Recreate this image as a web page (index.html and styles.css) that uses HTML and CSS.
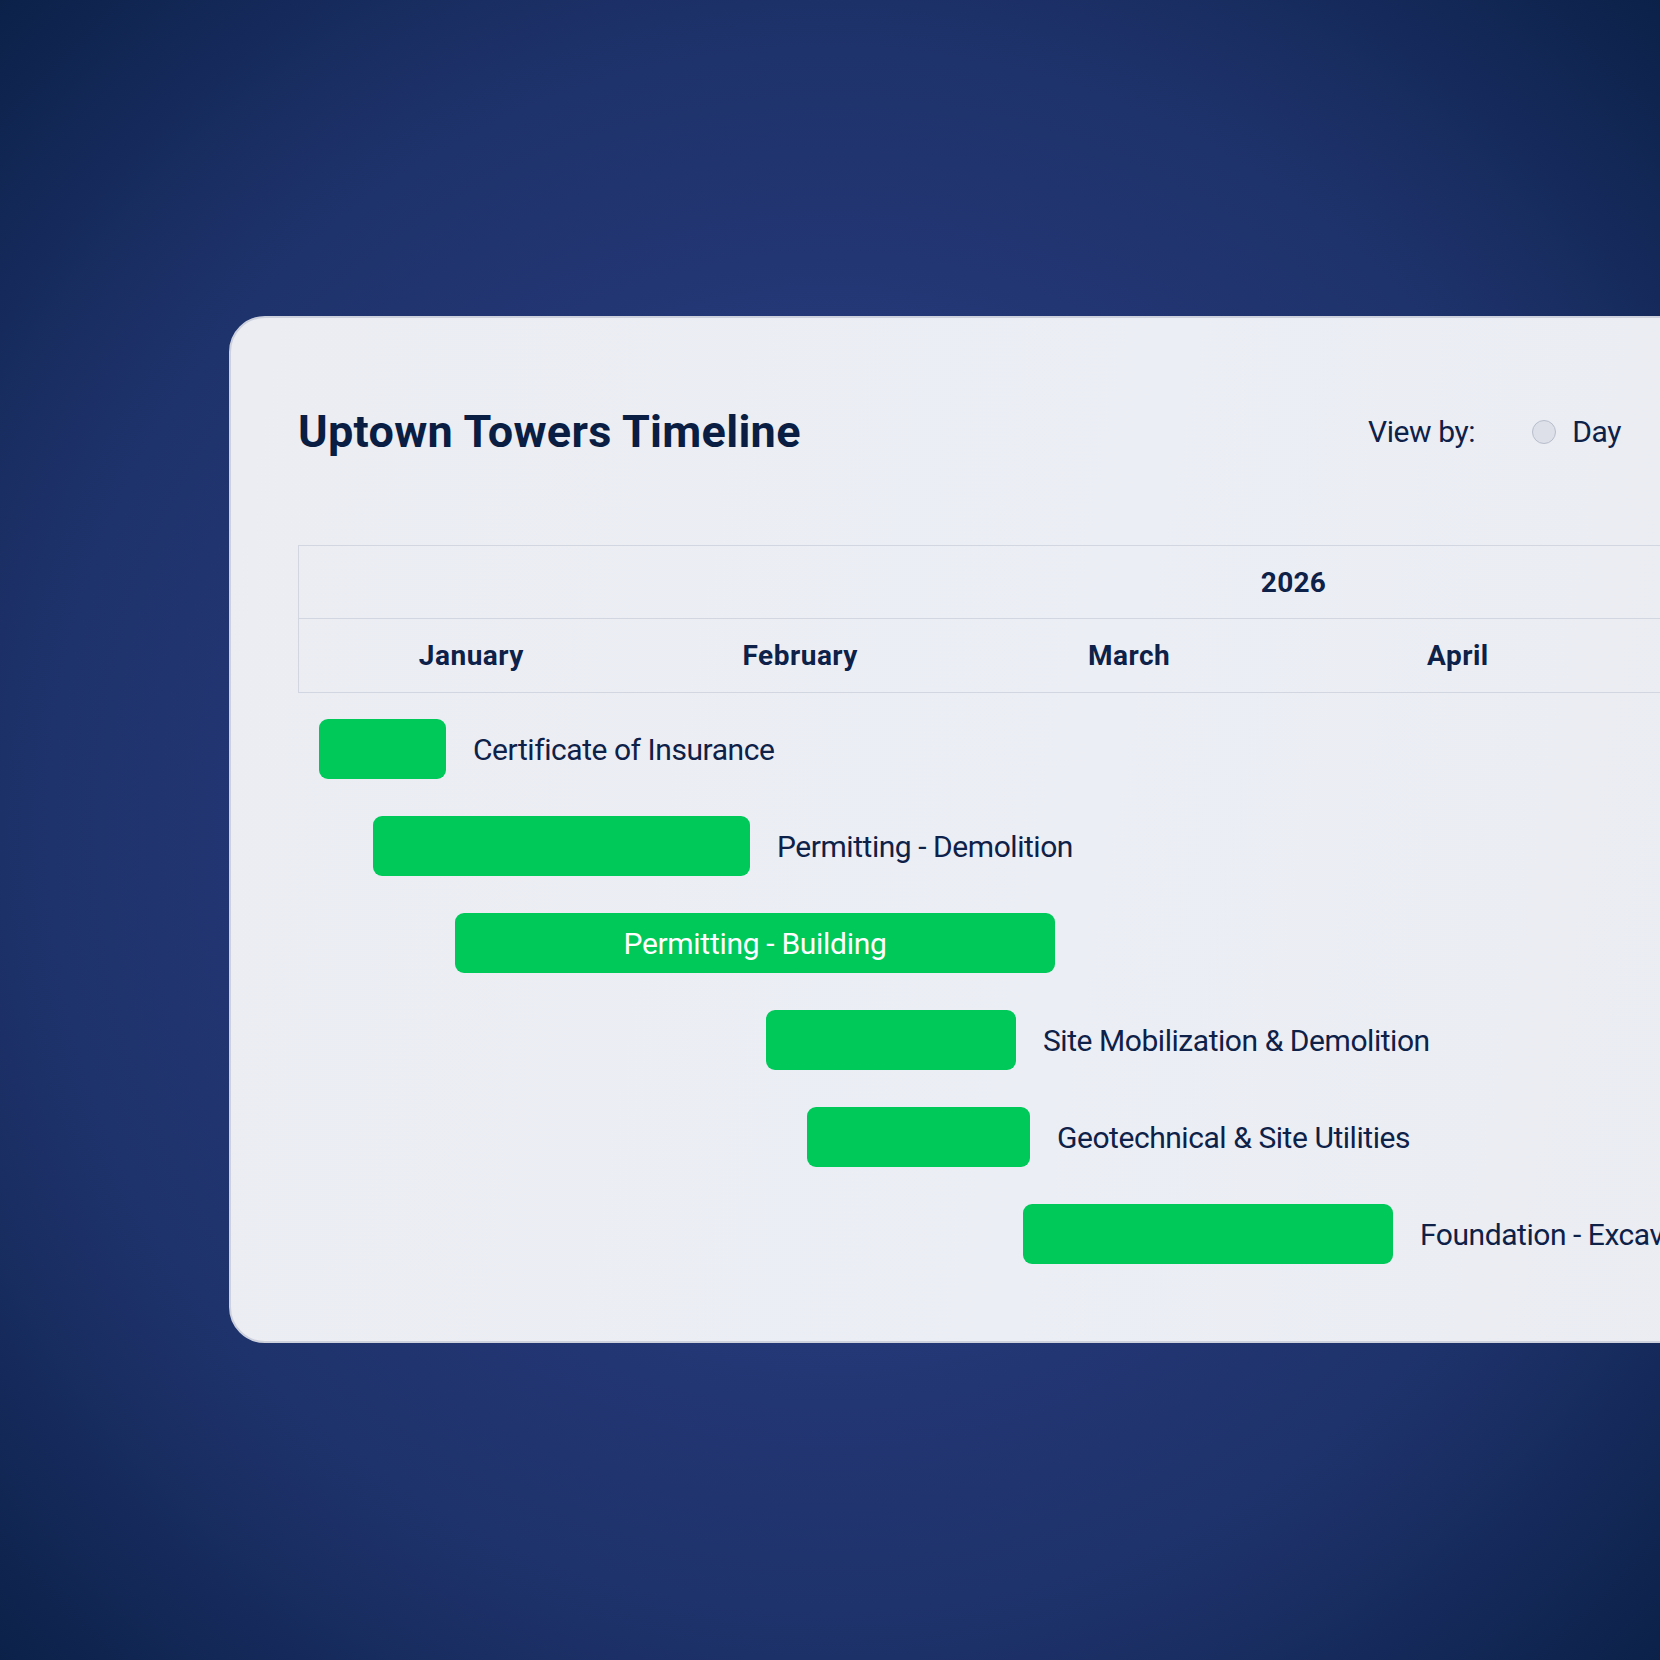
FILE: index.html
```html
<!DOCTYPE html>
<html lang="en">
<head>
<meta charset="utf-8">
<title>Uptown Towers Timeline</title>
<link rel="stylesheet" href="styles.css">
</head>
<body>
<main class="card">
  <header class="card-header">
    <h1 class="title">Uptown Towers Timeline</h1>
    <div class="view-by">
      <span class="view-label">View by:</span>
      <label class="option">
        <span class="radio"></span>
        <span class="option-text">Day</span>
      </label>
    </div>
  </header>

  <section class="timeline">
    <div class="scale">
      <div class="year-row">2026</div>
      <div class="month-row">
        <div class="month">January</div>
        <div class="month">February</div>
        <div class="month">March</div>
        <div class="month">April</div>
      </div>
    </div>

    <ul class="tasks">
      <li class="task">
        <span class="bar" style="margin-left:21px;width:127px"></span>
        <span class="task-label">Certificate of Insurance</span>
      </li>
      <li class="task">
        <span class="bar" style="margin-left:75px;width:377px"></span>
        <span class="task-label">Permitting - Demolition</span>
      </li>
      <li class="task">
        <span class="bar bar-inside" style="margin-left:157px;width:600px">Permitting - Building</span>
      </li>
      <li class="task">
        <span class="bar" style="margin-left:468px;width:250px"></span>
        <span class="task-label">Site Mobilization &amp; Demolition</span>
      </li>
      <li class="task">
        <span class="bar" style="margin-left:509px;width:223px"></span>
        <span class="task-label">Geotechnical &amp; Site Utilities</span>
      </li>
      <li class="task">
        <span class="bar" style="margin-left:725px;width:370px"></span>
        <span class="task-label">Foundation - Excavation</span>
      </li>
    </ul>
  </section>
</main>
</body>
</html>
```

FILE: styles.css
```css
html, body {
  margin: 0;
  width: 1660px;
  height: 1660px;
  overflow: hidden;
}

body {
  box-sizing: border-box;
  padding: 316px 0 0 229px;
  font-family: Roboto, "Liberation Sans", sans-serif;
  color: #0e2148;
  background: radial-gradient(circle at 50% 50%, #2c4084 0px, #26397a 420px, #1d3169 830px, #0b2148 1180px);
}

.card {
  box-sizing: border-box;
  width: 2200px;
  padding: 87px 0 77px 67px;
  border: 2px solid #cdd1dd;
  border-radius: 36px;
  background: linear-gradient(100deg, #ebedf3 0%, #eceef5 40%, #e9ebf0 100%);
}

.card-header {
  display: flex;
  align-items: center;
  justify-content: space-between;
  width: 1323px;
}

.title {
  margin: 0;
  font-size: 45px;
  line-height: 54px;
  font-weight: 700;
  letter-spacing: 0.3px;
  color: #0a1e43;
}

.view-by {
  display: flex;
  align-items: center;
  font-size: 30px;
  line-height: 36px;
  letter-spacing: -0.4px;
}

.view-label {
  margin-right: 57px;
}

.option {
  display: flex;
  align-items: center;
  gap: 16px;
}

.radio {
  box-sizing: border-box;
  width: 24px;
  height: 24px;
  border: 1.5px solid #b7becb;
  border-radius: 50%;
  background: #dde0e8;
}

.timeline {
  margin-top: 86px;
}

.scale {
  box-sizing: border-box;
  width: 1990px;
  border: 1px solid #d2d6e0;
  border-right: none;
}

.year-row {
  height: 72px;
  display: flex;
  align-items: center;
  justify-content: center;
  font-size: 28px;
  font-weight: 700;
  letter-spacing: 0.3px;
  border-bottom: 1px solid #d2d6e0;
}

.month-row {
  height: 73px;
  display: grid;
  grid-template-columns: repeat(6, 1fr);
  padding: 0 8px;
}

.month {
  display: flex;
  align-items: center;
  justify-content: center;
  font-size: 28px;
  font-weight: 700;
  letter-spacing: 0.5px;
}

.tasks {
  list-style: none;
  margin: 26px 0 0;
  padding: 0;
  display: flex;
  flex-direction: column;
  gap: 37px;
}

.task {
  display: flex;
  align-items: center;
  height: 60px;
}

.bar {
  flex: none;
  box-sizing: border-box;
  height: 60px;
  border-radius: 9px;
  background: #00c95a;
}

.bar-inside {
  display: flex;
  align-items: center;
  justify-content: center;
  color: #ffffff;
  font-size: 30px;
  letter-spacing: -0.3px;
}

.task-label {
  margin-left: 27px;
  font-size: 30px;
  letter-spacing: -0.45px;
  white-space: nowrap;
}
```
